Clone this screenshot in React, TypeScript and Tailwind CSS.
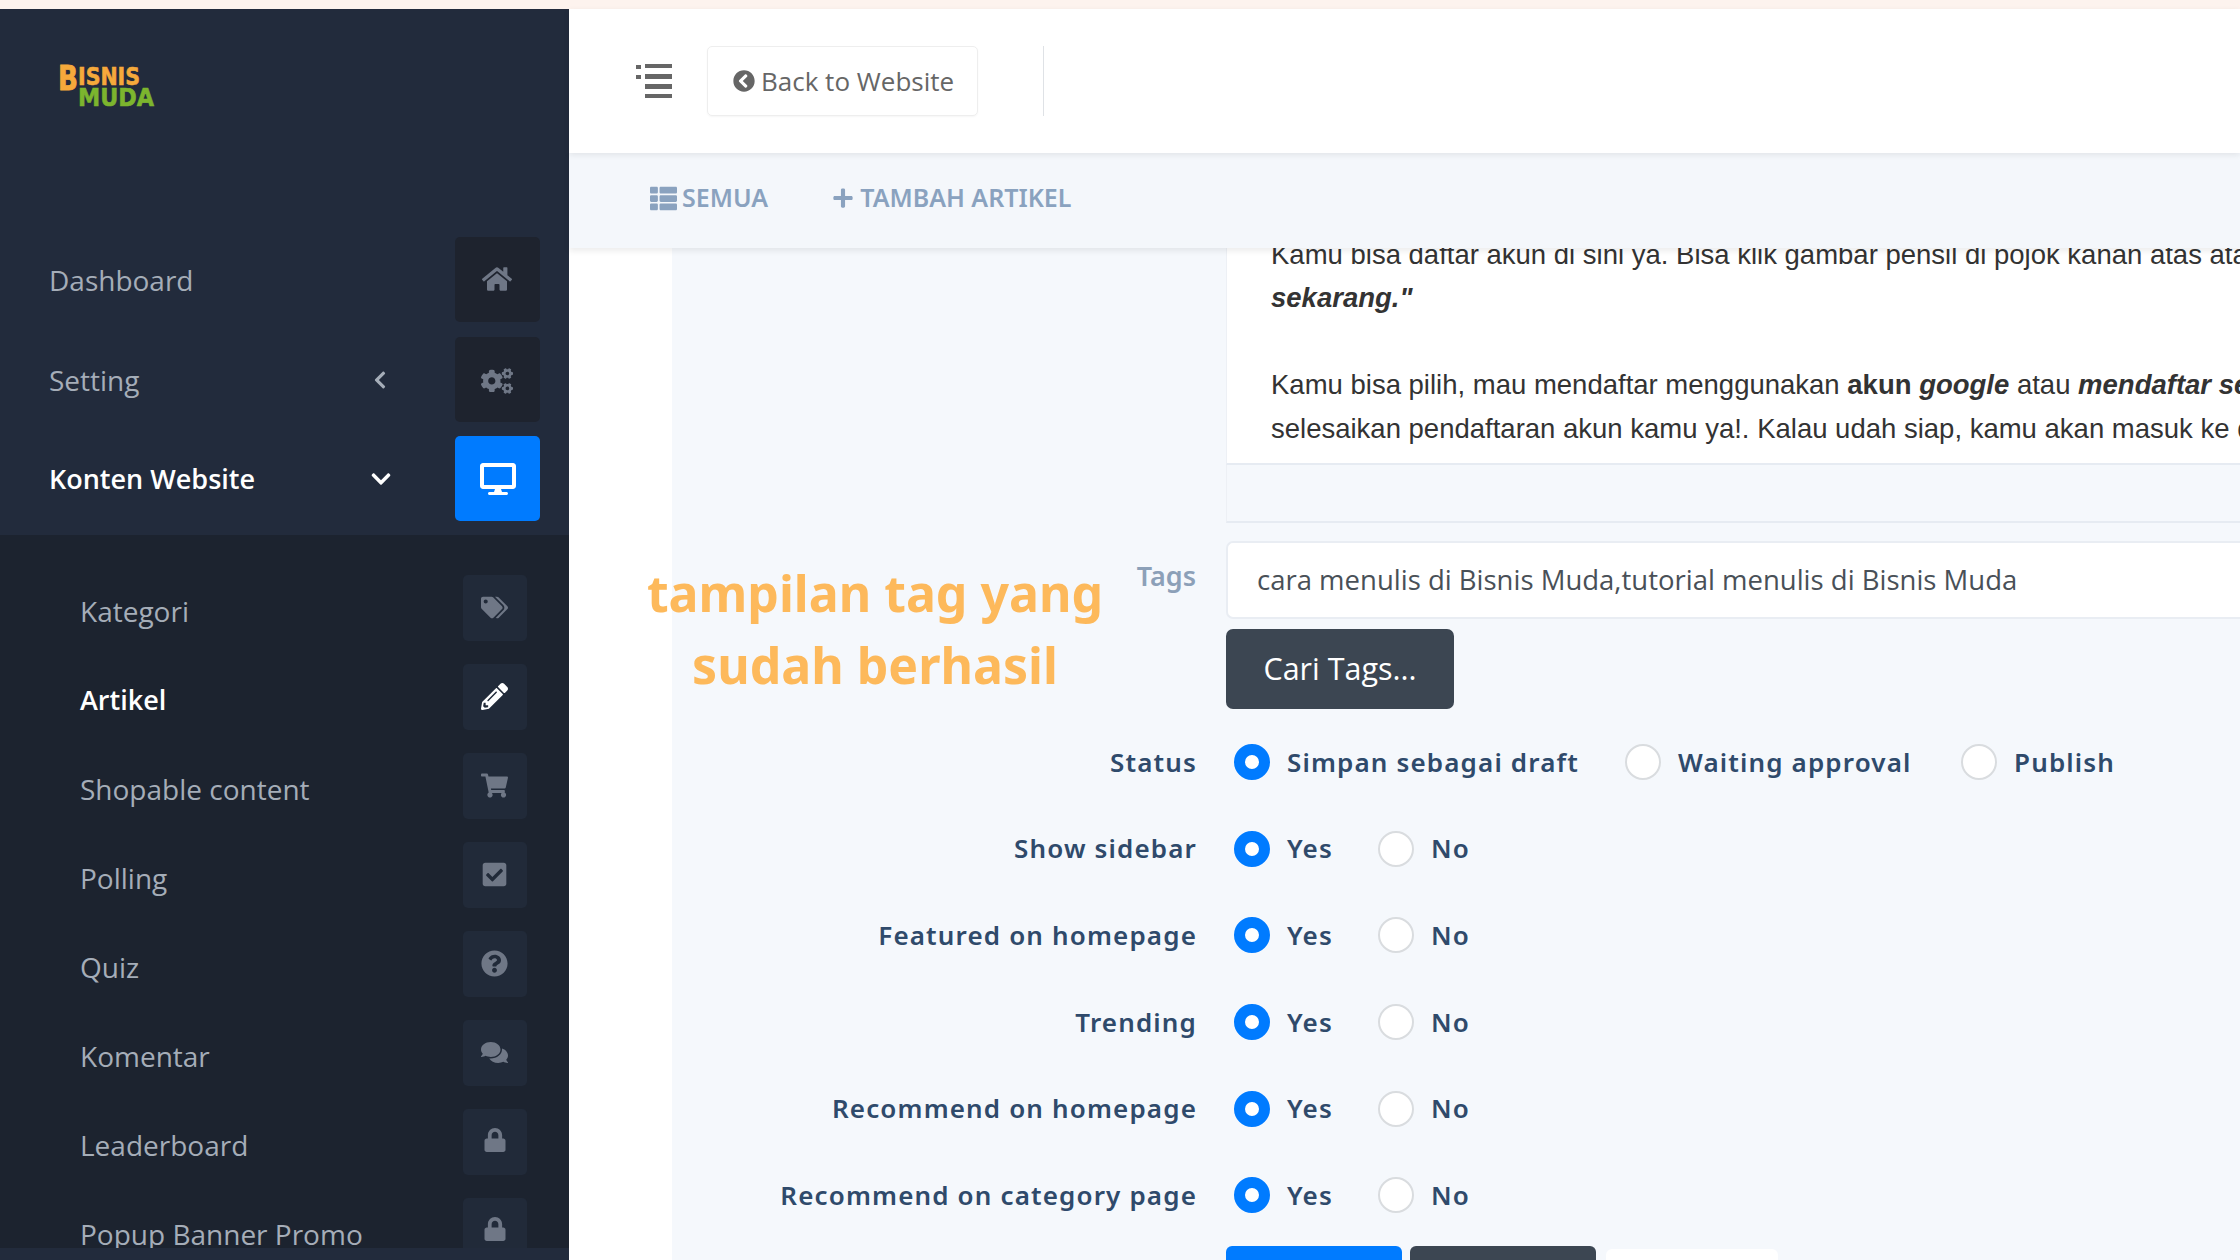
import React from "react";
import { FaHome, FaCogs, FaDesktop, FaTags, FaPencilAlt, FaShoppingCart, FaCheckSquare, FaQuestionCircle, FaComments, FaLock, FaChevronCircleLeft, FaThList, FaPlus, FaChevronLeft, FaChevronDown } from "react-icons/fa";

const sub: [string, React.ComponentType<{ className?: string }>, boolean?, boolean?][] = [
  ["Kategori", FaTags],
  ["Artikel", FaPencilAlt, true],
  ["Shopable content", FaShoppingCart],
  ["Polling", FaCheckSquare],
  ["Quiz", FaQuestionCircle],
  ["Komentar", FaComments],
  ["Leaderboard", FaLock, false, true],
  ["Popup Banner Promo", FaLock, false, true],
];

function Radio({ on }: { on?: boolean }) {
  return on ? (
    <span className="block w-[36px] h-[36px] rounded-full border-[11px] border-[#007bff] bg-white shrink-0" />
  ) : (
    <span className="block w-[36px] h-[36px] rounded-full border-2 border-[#d9dcdf] bg-white shrink-0" />
  );
}

function Row({ label, opts }: { label: string; opts: [string, number][] }) {
  return (
    <div className="flex items-center h-[86.6px]">
      <div className="w-[525px] text-right text-[#2f4a6b] font-semibold tracking-[1.15px]">{label}</div>
      <div className="flex items-center ml-[37px]">
        {opts.map(([t, w], i) => (
          <div key={t} className="flex items-center gap-[17px]" style={{ width: w }}>
            <Radio on={i === 0} />
            <span className="text-[#2f4a6b] font-semibold tracking-[1.15px] whitespace-nowrap">{t}</span>
          </div>
        ))}
      </div>
    </div>
  );
}

const yn: [string, number][] = [["Yes", 144], ["No", 100]];

export default function App() {
  return (
    <div className="w-[2240px] h-[1260px] overflow-hidden flex flex-col font-['Noto_Sans',sans-serif] text-[26px] bg-white">
      <div className="h-[9px] bg-[#fdf3ee] shrink-0" />
      <div className="flex flex-1 min-h-0">
        <aside className="w-[569px] shrink-0 bg-[#222b3c] flex flex-col font-['Open_Sans',sans-serif] text-[28px]">
          <div className="h-[228px] pl-[56px] pt-[51px] shrink-0">
            <svg width="100" height="50" viewBox="0 0 100 50">
              <text x="2" y="30" fontFamily="'DejaVu Sans',sans-serif" fontWeight="700" fontSize="33" fill="#f5a93b" stroke="#f5a93b" strokeWidth="0.8" textLength="20" lengthAdjust="spacingAndGlyphs">B</text>
              <text x="22" y="25" fontFamily="'DejaVu Sans',sans-serif" fontWeight="700" fontSize="24" fill="#f5a93b" stroke="#f5a93b" strokeWidth="0.6" textLength="62" lengthAdjust="spacingAndGlyphs">ISNIS</text>
              <text x="22" y="46" fontFamily="'DejaVu Sans',sans-serif" fontWeight="700" fontSize="24" fill="#7cb52e" stroke="#7cb52e" strokeWidth="0.6" textLength="76" lengthAdjust="spacingAndGlyphs">MUDA</text>
            </svg>
          </div>
          <div className="flex items-center h-[85px] mb-[15px] pl-[49px] pr-[29px] shrink-0">
            <span className="flex-1 text-[#a5adb8]">Dashboard</span>
            <span className="w-[85px] h-[85px] rounded-[5px] bg-[#1e232e] flex items-center justify-center text-[#6f7786]"><FaHome className="text-[30px] -mt-[2px] -ml-[1px]" /></span>
          </div>
          <div className="flex items-center h-[85px] mb-[14px] pl-[49px] pr-[29px] shrink-0">
            <span className="flex-1 text-[#a5adb8]">Setting</span>
            <FaChevronLeft className="text-[#a5adb8] text-[20px] mr-[65px] mt-[1px]" />
            <span className="w-[85px] h-[85px] rounded-[5px] bg-[#1e232e] flex items-center justify-center text-[#6f7786]"><FaCogs className="text-[32px] mt-[2px] -ml-[1px]" /></span>
          </div>
          <div className="flex items-center h-[85px] pl-[49px] pr-[29px] shrink-0">
            <span className="flex-1 text-white font-semibold pt-[1px] text-[27px]">Konten Website</span>
            <FaChevronDown className="text-white text-[22px] mr-[63px]" />
            <span className="w-[85px] h-[85px] rounded-[5px] bg-[#007bff] flex items-center justify-center text-white"><FaDesktop className="text-[36px]" /></span>
          </div>
          <div className="mt-[14px] flex-1 min-h-0 bg-[#1c232f] pt-[40px] pl-[80px] pr-[42px] flex flex-col gap-[23px] overflow-hidden mb-[12px]">
            {sub.map(([t, Icon, active, lock]) => (
              <div key={t} className="flex items-center h-[66px] shrink-0">
                <span className={"flex-1 pt-[6px] " + (active ? "text-white font-semibold text-[27px]" : "text-[#a5adb8]")}>{t}</span>
                <span className={"w-[64px] h-[66px] rounded-[5px] bg-[#212a39] flex items-center justify-center " + (active ? "text-white" : "text-[#6f7786]")}>
                  <Icon className={(lock ? "text-[24px] -mt-[4px]" : "text-[27px] -mt-[2px]") + " -ml-[1px]"} />
                </span>
              </div>
            ))}
          </div>
        </aside>
        <main className="flex-1 min-w-0 flex flex-col relative">
          <header className="h-[144px] shrink-0 bg-white flex items-center pl-[67px] relative z-30 shadow-[0_2px_6px_rgba(0,0,0,0.08)]">
            <svg width="36" height="36" viewBox="0 0 36 36" className="text-[#666] mr-[35px] -mt-[1px]" fill="currentColor">
              <rect x="0" y="2" width="5" height="4" />
              <rect x="9" y="1" width="27" height="4" />
              <rect x="0" y="12" width="5" height="4" />
              <rect x="9" y="11" width="27" height="5" />
              <rect x="9" y="21" width="27" height="5" />
              <rect x="9" y="31" width="27" height="4" />
            </svg>
            <div className="w-[271px] h-[70px] rounded-[5px] border border-[#eeeeee] flex items-center pl-[25px] gap-[6px] text-[#666] font-['Open_Sans',sans-serif] text-[26px] shadow-[0_1px_2px_rgba(0,0,0,0.04)]">
              <FaChevronCircleLeft className="text-[22px]" />
              <span className="pt-[1px]">Back to Website</span>
            </div>
            <div className="w-px h-[70px] bg-[#dfe2e6] ml-[65px]" />
          </header>
          <nav className="h-[95px] pb-[5px] shrink-0 bg-[#f4f7fb] flex items-center pl-[81px] text-[#8aa2bf] font-semibold text-[25px] shadow-[0_3px_6px_rgba(0,0,0,0.08)] relative z-20">
            <FaThList className="text-[27px] mr-[5px]" />
            <span>SEMUA</span>
            <FaPlus className="text-[22px] ml-[64px] mr-[6px]" />
            <span>TAMBAH ARTIKEL</span>
          </nav>
          <div className="flex-1 min-h-0 flex overflow-hidden">
            <div className="w-[103px] bg-white shrink-0" />
            <div className="flex-1 min-w-0 bg-[#f5f8fc] pl-[554px]">
              <div className="bg-white h-[217px] overflow-hidden border-b-2 border-[#e6ebf2] border-l border-l-[#edf0f5] pl-[44px] font-['Liberation_Sans',sans-serif] text-[#333] text-[27.5px] leading-[43.6px] whitespace-nowrap">
                <div className="-mt-[15.5px]">
                  <p>Kamu bisa daftar akun di sini ya. Bisa klik gambar pensil di pojok kanan atas atau klik tombol</p>
                  <p><b><i>sekarang."</i></b></p>
                  <p className="mt-[43.6px]">Kamu bisa pilih, mau mendaftar menggunakan <b>akun <i>google</i></b> atau <b><i>mendaftar sendiri</i></b></p>
                  <p>selesaikan pendaftaran akun kamu ya!. Kalau udah siap, kamu akan masuk ke dashboard</p>
                </div>
              </div>
              <div className="h-[58px] border-b-2 border-[#e6ebf2] border-l border-l-[#edf0f5]" />
              <div className="mt-[18px] h-[78px] bg-white border-2 border-[#e9edf3] border-r-0 rounded-l-[7px] flex items-center pl-[29px] text-[#495057] font-['Open_Sans',sans-serif] text-[27.5px]">
                cara menulis di Bisnis Muda,tutorial menulis di Bisnis Muda
              </div>
              <div className="mt-[10px] w-[228px] h-[80px] rounded-[7px] bg-[#3c4652] text-white font-['Open_Sans',sans-serif] text-[30.5px] flex items-center justify-center">Cari Tags...</div>
              <div className="-ml-[554px] mt-[10px]">
                <Row label="Status" opts={[["Simpan sebagai draft", 391], ["Waiting approval", 336], ["Publish", 200]]} />
                <Row label="Show sidebar" opts={yn} />
                <Row label="Featured on homepage" opts={yn} />
                <Row label="Trending" opts={yn} />
                <Row label="Recommend on homepage" opts={yn} />
                <Row label="Recommend on category page" opts={yn} />
              </div>
              <div className="flex items-start gap-[8px] mt-[7px]">
                <div className="w-[176px] h-[40px] bg-[#007bff] rounded-[6px]" />
                <div className="w-[186px] h-[40px] bg-[#3c4652] rounded-[6px]" />
                <div className="w-[172px] h-[40px] bg-white rounded-[6px] mt-[3px] ml-[2px]" />
              </div>
            </div>
          </div>
          <div className="absolute left-[60px] top-[549px] w-[492px] text-center text-[#fdb95b] font-bold text-[50px] leading-[71.5px] z-10">
            tampilan tag yang<br />sudah berhasil
          </div>
          <div className="absolute left-[565px] top-[549px] w-[62px] text-right text-[#8ca0b8] font-semibold text-[27px] leading-[36px]">Tags</div>
        </main>
      </div>
    </div>
  );
}
